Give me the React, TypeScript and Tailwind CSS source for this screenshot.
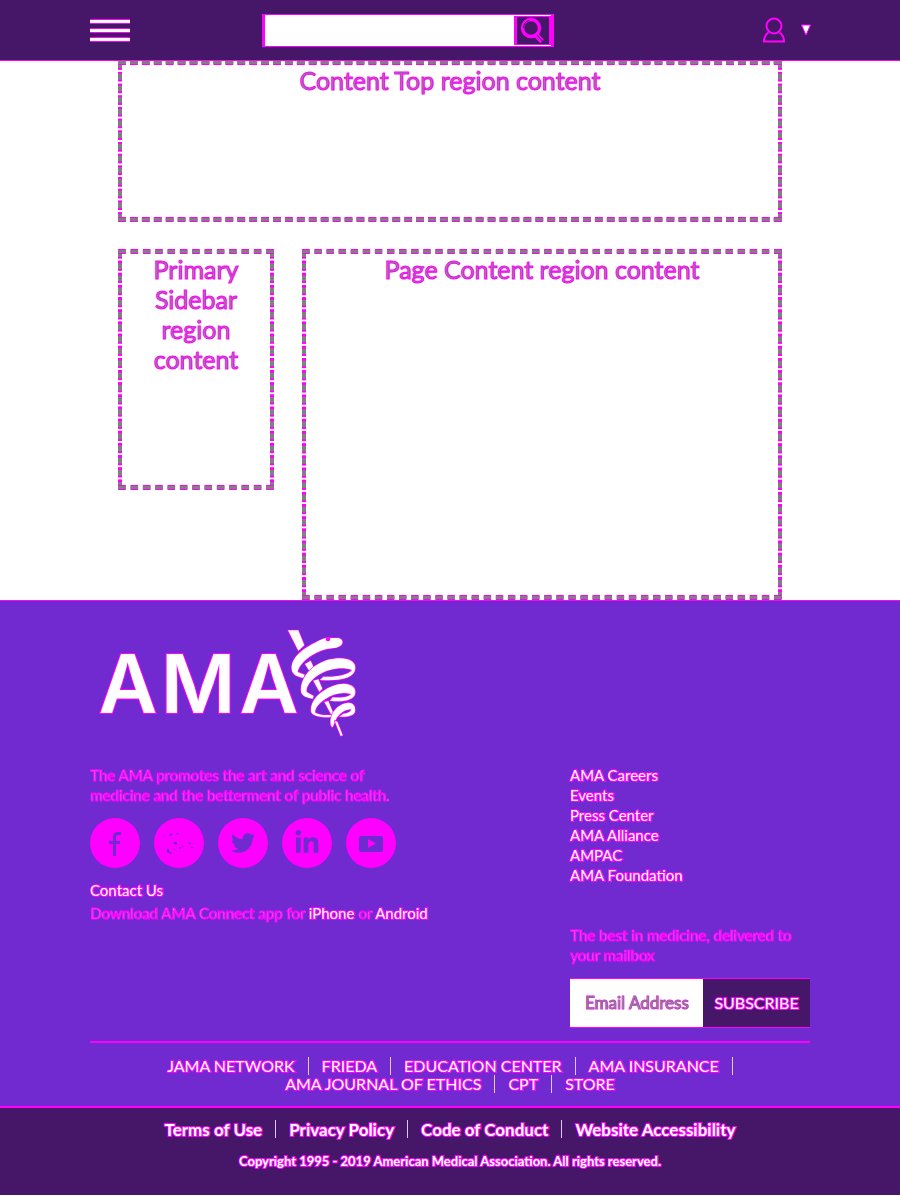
import { Fragment, type ReactNode } from "react";
import { FaTwitter, FaLinkedinIn } from "react-icons/fa";

const dashes =
  "[background:linear-gradient(90deg,#808080_33%,transparent_33%_67%,#808080_67%)_0_-4px/12px_3px_round_no-repeat_padding-box_border-box,linear-gradient(90deg,#ff00ff_33%,transparent_33%_67%,#ff00ff_67%)_0_-5px/12px_5px_round_no-repeat_padding-box_border-box,linear-gradient(90deg,#808080_33%,transparent_33%_67%,#808080_67%)_0_calc(100%_+_4px)/12px_3px_round_no-repeat_padding-box_border-box,linear-gradient(90deg,#ff00ff_33%,transparent_33%_67%,#ff00ff_67%)_0_calc(100%_+_5px)/12px_5px_round_no-repeat_padding-box_border-box,linear-gradient(#808080_3px,#ff00ff_3px_5px,transparent_5px_7px,#ff00ff_7px_9px,#808080_9px)_-4px_0/4px_12px_no-repeat_round_padding-box_border-box,linear-gradient(#808080_3px,#ff00ff_3px_5px,transparent_5px_7px,#ff00ff_7px_9px,#808080_9px)_calc(100%_+_4px)_0/4px_12px_no-repeat_round_padding-box_border-box]";

const outline = "[-webkit-text-stroke:2px_#ff00ff] [paint-order:stroke_fill]";
const muted = "text-[#d9c2f2] [-webkit-text-stroke:1px_#ff00ff] [paint-order:normal]";
const bright = "text-white [-webkit-text-stroke:2px_#ff00ff] [paint-order:stroke_fill]";

function Region({ children, className }: { children: ReactNode; className: string }) {
  return (
    <section
      className={`border-x-4 border-y-5 border-transparent text-center text-[25px] leading-[30px] text-[#808080] [-webkit-text-stroke:1px_#ff00ff] ${dashes} ${className}`}
    >
      {children}
    </section>
  );
}

function LinkRow({ items, trailing }: { items: string[]; trailing?: boolean }) {
  return (
    <div className="flex justify-center gap-[13px]">
      {items.map((item, i) => (
        <Fragment key={item}>
          <a href="#">{item}</a>
          {(trailing || i < items.length - 1) && (
            <span className="h-[18px] w-px bg-[#e0c8f4]" aria-hidden="true" />
          )}
        </Fragment>
      ))}
    </div>
  );
}

function Logo() {
  return (
    <svg viewBox="0 0 270 125" className="block h-[125px] w-[270px]" role="img" aria-label="AMA">
      <g
        fill="#fff"
        stroke="#ff00ff"
        strokeWidth="2"
        paintOrder="stroke"
        fontFamily="Inter, sans-serif"
        fontSize="81"
        fontWeight="600"
        textAnchor="middle"
      >
        <text x="38" y="93">A</text>
        <text x="108" y="93">M</text>
        <text x="179" y="93">A</text>
      </g>
      <g transform="translate(190 0) scale(.3333)" fill="#fff" stroke="#ff00ff" strokeWidth="4" strokeLinejoin="round">
        <path d="M24 31H55L73 76L55 92Z" />
        <path d="M75 132L92 122L102 145L90 156Z" />
        <path d="M100 182L115 178L127 206L118 215Z" />
        <path d="M133 246L145 243L160 280L155 286Z" />
        <path d="M36 152C28 115 70 85 105 68C125 58 138 52 150 54L176 54C190 58 191 72 180 78C165 88 150 82 130 90C92 102 57 132 53 156L74 164L70 174C50 170 38 162 36 152Z" />
        <path d="M63 215C60 170 100 130 150 118C195 108 228 120 226 145C225 172 185 185 120 180L130 170C170 172 205 165 216 150C190 140 150 143 115 165C85 185 78 205 80 216L101 228L98 236C75 232 66 226 63 215Z" />
        <path d="M93 275C90 235 130 205 175 193C205 186 228 198 226 218C224 242 185 247 150 242L158 232C185 234 205 232 213 222C190 215 160 220 135 238C110 255 104 270 106 278C118 286 140 286 156 284L154 292C120 292 98 288 93 275Z" />
        <path d="M153 318C145 280 175 250 205 248C222 248 228 262 225 275C222 287 200 292 178 290L190 281C203 280 212 276 214 268C195 268 178 280 168 298L158 322Z" />
        <path d="M164 303L172 305L188 346L182 348Z" />
        <circle cx="144" cy="57" r="5" fill="#ff00ff" />
      </g>
    </svg>
  );
}

function FacebookMark() {
  return (
    <svg viewBox="0 0 50 50" className="size-[50px]" fill="none" stroke="currentColor" strokeWidth="3">
      <path d="M31 15.5H28Q24.5 15.5 24.5 19V38M19 24.5H30" />
    </svg>
  );
}

function ScatterMark() {
  return (
    <svg viewBox="0 0 50 50" className="size-[50px]" fill="currentColor">
      <path d="M15 17l3-2v2l-2 1zM22 15l2 0 1 2-2-1zM19 24h4l0 2-1 1-2-1zM33 24l3 1 2 1-3 0zM13 31h2l0 2 3 2-1 1-4-2zM24 30l3-1 0 2zM20 31h1v1h-1zM28 28h1v1h-1zM37 29h2v1h-2zM10 17h1v1h-1z" />
    </svg>
  );
}

function YoutubeMark() {
  return (
    <svg viewBox="0 0 50 50" className="size-[50px]" fill="currentColor">
      <path fillRule="evenodd" d="M15 18H35Q37 18 37 20V32Q37 34 35 34H15Q13 34 13 32V20Q13 18 15 18ZM22 21V30L30 25.5Z" />
    </svg>
  );
}

const social = [
  { name: "Facebook", icon: <FacebookMark /> },
  { name: "Community", icon: <ScatterMark /> },
  { name: "Twitter", icon: <FaTwitter size={24} /> },
  { name: "LinkedIn", icon: <FaLinkedinIn size={26} /> },
  { name: "YouTube", icon: <YoutubeMark /> },
];

const siteLinks = ["AMA Careers", "Events", "Press Center", "AMA Alliance", "AMPAC", "AMA Foundation"];

export default function App() {
  return (
    <div className="bg-white font-[Lato,'Open_Sans',sans-serif]">
      <header className="h-[61px] border-b border-[#ff00ff] bg-[#461668]">
        <div className="mx-auto flex h-[60px] max-w-[720px] items-center justify-between">
          <div className="flex items-center gap-33">
            <button aria-label="Menu" className="flex w-10 flex-col gap-1">
              <span className="h-[5px] w-full border-y border-[#ff00ff] bg-white" />
              <span className="h-[5px] w-full border-y border-[#ff00ff] bg-white" />
              <span className="h-[5px] w-full border-y border-[#ff00ff] bg-white" />
            </button>
            <form className="flex h-[33px] w-[292px] border-y border-r-3 border-l-3 border-[#ff00ff] bg-white" onSubmit={(e) => e.preventDefault()}>
              <input aria-label="Search" className="min-w-0 flex-1 bg-white px-2 outline-none" />
              <button aria-label="Search" className="my-px flex w-[37px] items-center justify-center border-y border-r-2 border-l-3 border-[#ff00ff] bg-[#461668]">
                <svg viewBox="0 0 28 28" className="size-7" fill="none" stroke="#ff00ff">
                  <circle cx="12" cy="12" r="8.500" strokeWidth="3.500" />
                  <path d="M17 19L23 25.500" strokeWidth="5" />
                  <path d="M18 19L24 26M4.500 12A7.500 8 0 0 1 10 4.500" stroke="#461668" strokeWidth="1" />
                </svg>
              </button>
            </form>
          </div>
          <button aria-label="Account" className="mr-[-1px] flex items-center gap-4">
            <svg viewBox="0 0 22 26" className="h-[26px] w-[22px]" fill="none" stroke="#ff00ff" strokeWidth="2">
              <circle cx="11" cy="9" r="7.5" />
              <path d="M5.5 15.5Q1 18.5 1 24.500H21Q21 18.500 16.500 15.500" />
            </svg>
            <svg viewBox="0 0 10 12" className="h-3 w-2.5" fill="#fff" stroke="#ff00ff">
              <path d="M.5 1H9.500L5 11Z" />
            </svg>
          </button>
        </div>
      </header>

      <main className="mx-auto -mt-px max-w-[664px]">
        <Region className="h-[162px]">Content Top region content</Region>
        <div className="mt-[27px] flex items-start gap-7">
          <Region className="h-[241px] w-[156px] px-4">Primary Sidebar region content</Region>
          <Region className="h-[351px] flex-1">Page Content region content</Region>
        </div>
      </main>

      <footer className="border-t border-[#ff00ff] bg-[#7129d0] text-[15px] leading-5 text-white">
        <div className={`mx-auto max-w-[720px] pt-[19px] ${outline}`}>
          <Logo />
          <div className="flex justify-between pt-5">
            <div>
              <p className={`w-80 ${muted}`}>The AMA promotes the art and science of medicine and the betterment of public health.</p>
              <div className="mt-[13px] flex gap-3.5">
                {social.map((s) => (
                  <a key={s.name} href="#" aria-label={s.name} className="flex size-[50px] items-center justify-center rounded-full bg-[#ff00ff] text-[#7129d0]">
                    {s.icon}
                  </a>
                ))}
              </div>
              <p className="mt-3"><a href="#">Contact Us</a></p>
              <p className={`mt-[3px] ${muted}`}>
                Download AMA Connect app for <a href="#" className={bright}>iPhone</a> or <a href="#" className={bright}>Android</a>
              </p>
            </div>
            <div className="w-60">
              <ul>
                {siteLinks.map((l) => (
                  <li key={l}><a href="#">{l}</a></li>
                ))}
              </ul>
              <p className={`mt-10 ${muted}`}>The best in medicine, delivered to your mailbox</p>
              <form className="mt-[13px] flex h-[50px] border-y border-[#ff00ff]" onSubmit={(e) => e.preventDefault()}>
                <input
                  aria-label="Email Address"
                  placeholder="Email Address"
                  className="w-[133px] bg-white pl-[15px] text-[17px] outline-none [-webkit-text-stroke:1px_#ff00ff] placeholder:text-[#808080]"
                />
                <button className="flex-1 bg-[#461668] text-base">SUBSCRIBE</button>
              </form>
            </div>
          </div>
          <nav className="mt-[13px] border-t-2 border-[#ff00ff] pt-3.5 pb-[13px] text-base leading-[18px]">
            <LinkRow trailing items={["JAMA NETWORK", "FRIEDA", "EDUCATION CENTER", "AMA INSURANCE"]} />
            <LinkRow items={["AMA JOURNAL OF ETHICS", "CPT", "STORE"]} />
          </nav>
        </div>
        <div className={`border-t-2 border-[#ff00ff] bg-[#461668] pt-3 pb-6 text-center font-bold ${outline}`}>
          <div className="text-[17px]">
            <LinkRow items={["Terms of Use", "Privacy Policy", "Code of Conduct", "Website Accessibility"]} />
          </div>
          <p className="mt-[11px] text-[13px]">Copyright 1995 - 2019 American Medical Association. All rights reserved.</p>
        </div>
      </footer>
    </div>
  );
}
